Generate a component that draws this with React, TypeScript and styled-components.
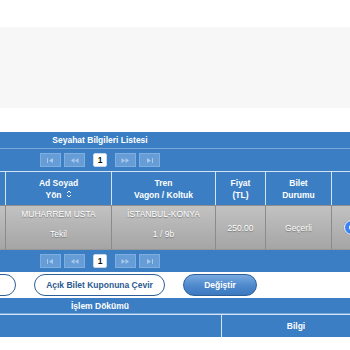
import React from 'react';
import styled, { createGlobalStyle } from 'styled-components';

const GlobalStyle = createGlobalStyle`
  html, body {
    margin: 0;
    padding: 0;
    background: #ffffff;
    overflow: hidden;
    font-family: "Liberation Sans", Arial, Helvetica, sans-serif;
  }
`;

const BLUE = '#3b7ec3';

const Page = styled.div`
  width: 350px;
  height: 350px;
  overflow: hidden;
  display: flex;
  flex-direction: column;
`;

const TopSpace = styled.div`
  height: 27px;
  flex: none;
`;

const GrayBand = styled.div`
  height: 81px;
  flex: none;
  background: #f7f7f7;
`;

const GapSpace = styled.div`
  height: 24px;
  flex: none;
`;

const Wide = styled.div`
  width: 540px;
  margin-left: -170px;
  flex: none;
  display: flex;
  flex-direction: column;
`;

const TitleBar = styled.div<{ $h: number }>`
  height: ${p => p.$h}px;
  background: ${BLUE};
  color: #ffffff;
  font-size: 8.5px;
  font-weight: bold;
  display: flex;
  align-items: center;
  justify-content: center;
  border-bottom: 1px solid #7aa8d9;
`;

const PagerBar = styled.div<{ $h: number }>`
  height: ${p => p.$h}px;
  background: ${BLUE};
  display: flex;
  align-items: center;
  justify-content: center;
  gap: 3px;
`;

const PageBtn = styled.div`
  width: 21px;
  height: 14px;
  box-sizing: border-box;
  background: #679dd6;
  border: 1px solid #7eafe0;
  display: flex;
  align-items: center;
  justify-content: center;
`;

const PageNum = styled.div`
  width: 14px;
  height: 14px;
  box-sizing: border-box;
  margin: 0 5px;
  background: #ffffff;
  border: 1px solid #c9d9ea;
  border-radius: 2px;
  color: #111;
  font-size: 8.5px;
  font-weight: bold;
  display: flex;
  align-items: center;
  justify-content: center;
`;

const GridRow = styled.div<{ $cols: string; $h: number }>`
  display: grid;
  grid-template-columns: ${p => p.$cols};
  height: ${p => p.$h}px;
`;

const HeadCell = styled.div`
  background: ${BLUE};
  color: #ffffff;
  font-size: 8.5px;
  font-weight: bold;
  line-height: 12px;
  border-top: 1px solid #d4e3f3;
  border-left: 1px solid #d4e3f3;
  display: flex;
  flex-direction: column;
  align-items: center;
  justify-content: center;
  text-align: center;
  &:first-child {
    border-left: none;
  }
`;

const Head2Cell = styled(HeadCell)<{ $pad?: number }>`
  align-items: ${p => (p.$pad ? 'flex-end' : 'center')};
  padding-right: ${p => p.$pad ?? 0}px;
`;

const DataCell = styled.div<{ $stack?: boolean }>`
  background: linear-gradient(#c2c2c2, #a5a5a5);
  color: #ffffff;
  text-shadow: 0 1px 1px rgba(0, 0, 0, 0.35);
  font-size: 8.5px;
  line-height: 10px;
  border-top: 1px solid #8e8e8e;
  border-left: 1px solid #8b8b8b;
  border-bottom: 1px solid #979797;
  display: flex;
  flex-direction: column;
  align-items: center;
  justify-content: ${p => (p.$stack ? 'flex-start' : 'center')};
  padding-top: ${p => (p.$stack ? 3 : 0)}px;
  gap: 10px;
  overflow: hidden;
  &:first-child {
    border-left: none;
  }
`;

const Radio = styled.div`
  width: 15px;
  height: 15px;
  box-sizing: border-box;
  border-radius: 50%;
  background: #3a83f4;
  border: 1px solid #ffffff;
  box-shadow: 0 0 1px rgba(0, 0, 0, 0.4);
  display: flex;
  align-items: center;
  justify-content: center;
  &::after {
    content: '';
    width: 5px;
    height: 5px;
    border-radius: 50%;
    background: #ffffff;
  }
`;

const ButtonRow = styled.div`
  height: 26px;
  background: #ffffff;
  display: flex;
  align-items: center;
  gap: 18px;
  padding-left: 86px;
`;

const OutlineBtn = styled.div<{ $w: number }>`
  width: ${p => p.$w}px;
  height: 22px;
  box-sizing: border-box;
  border: 1.5px solid #2d5f98;
  border-radius: 11px;
  background: #ffffff;
  color: #2b5a90;
  font-size: 8.5px;
  font-weight: bold;
  display: flex;
  align-items: center;
  justify-content: center;
`;

const FilledBtn = styled.div<{ $w: number }>`
  width: ${p => p.$w}px;
  height: 22px;
  box-sizing: border-box;
  border: 1px solid #2e5f99;
  border-radius: 11px;
  background: linear-gradient(#78aae0, #4d88cb 55%, #3c79c0);
  color: #ffffff;
  font-size: 8.5px;
  font-weight: bold;
  display: flex;
  align-items: center;
  justify-content: center;
`;

const PagerIcon = ({ kind }: { kind: 'first' | 'prev' | 'next' | 'last' }) => {
  const c = '#a9c9ec';
  return (
    <svg width="9" height="5" viewBox="0 0 9 5">
      {kind === 'first' && (
        <>
          <rect x="1" y="0" width="1" height="5" fill={c} />
          <polygon points="7,0 3,2.5 7,5" fill={c} />
        </>
      )}
      {kind === 'prev' && (
        <>
          <polygon points="4.5,0 1,2.5 4.5,5" fill={c} />
          <polygon points="8.5,0 5,2.5 8.5,5" fill={c} />
        </>
      )}
      {kind === 'next' && (
        <>
          <polygon points="0.5,0 4,2.5 0.5,5" fill={c} />
          <polygon points="4.5,0 8,2.5 4.5,5" fill={c} />
        </>
      )}
      {kind === 'last' && (
        <>
          <polygon points="2,0 6,2.5 2,5" fill={c} />
          <rect x="7" y="0" width="1" height="5" fill={c} />
        </>
      )}
    </svg>
  );
};

const SortIcon = () => (
  <svg width="6" height="8" viewBox="0 0 6 8" style={{ marginLeft: 4 }}>
    <polyline points="1,3 3,1 5,3" fill="none" stroke="#fff" strokeWidth="1" />
    <polyline points="1,5 3,7 5,5" fill="none" stroke="#fff" strokeWidth="1" />
  </svg>
);

const Pager = ({ h }: { h: number }) => (
  <PagerBar $h={h}>
    <PageBtn><PagerIcon kind="first" /></PageBtn>
    <PageBtn><PagerIcon kind="prev" /></PageBtn>
    <PageNum>1</PageNum>
    <PageBtn><PagerIcon kind="next" /></PageBtn>
    <PageBtn><PagerIcon kind="last" /></PageBtn>
  </PagerBar>
);

const COLS = '175px 106px 104px 50px 66px 39px';

export default function App() {
  return (
    <Page>
      <GlobalStyle />
      <TopSpace />
      <GrayBand />
      <GapSpace />
      <Wide>
        <TitleBar $h={16}>Seyahat Bilgileri Listesi</TitleBar>
        <Pager h={22} />
        <GridRow $cols={COLS} $h={34}>
          <HeadCell />
          <HeadCell>
            <span>Ad Soyad</span>
            <span>Yön<SortIcon /></span>
          </HeadCell>
          <HeadCell>
            <span>Tren</span>
            <span>Vagon / Koltuk</span>
          </HeadCell>
          <HeadCell>
            <span>Fiyat</span>
            <span>(TL)</span>
          </HeadCell>
          <HeadCell>
            <span>Bilet</span>
            <span>Durumu</span>
          </HeadCell>
          <HeadCell />
        </GridRow>
        <GridRow $cols={COLS} $h={45}>
          <DataCell />
          <DataCell $stack>
            <span>MUHARREM USTA</span>
            <span>Tekil</span>
          </DataCell>
          <DataCell $stack>
            <span>İSTANBUL-KONYA</span>
            <span>1 / 9b</span>
          </DataCell>
          <DataCell>
            <span>250.00</span>
          </DataCell>
          <DataCell>
            <span>Geçerli</span>
          </DataCell>
          <DataCell>
            <Radio />
          </DataCell>
        </GridRow>
        <Pager h={22} />
        <ButtonRow>
          <OutlineBtn $w={100} />
          <OutlineBtn $w={131}>Açık Bilet Kuponuna Çevir</OutlineBtn>
          <FilledBtn $w={74}>Değiştir</FilledBtn>
        </ButtonRow>
        <TitleBar $h={15}>İşlem Dökümü</TitleBar>
        <GridRow $cols="391px 149px" $h={23}>
          <Head2Cell $pad={342}>İşlem Birimi</Head2Cell>
          <Head2Cell>Bilgi</Head2Cell>
        </GridRow>
      </Wide>
    </Page>
  );
}
